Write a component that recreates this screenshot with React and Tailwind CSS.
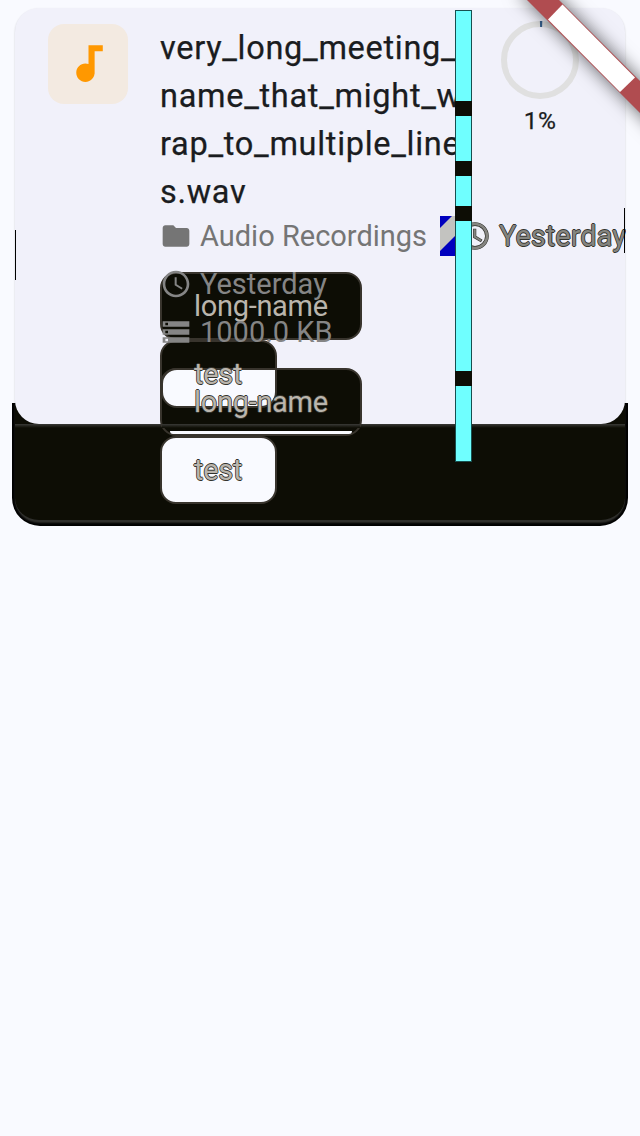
const Clock = ({ outlined }) => (
  <svg viewBox="0 0 24 24" className="size-8 shrink-0" fill="currentColor">
    {outlined && (
      <g fill="none" stroke="#33332d" strokeWidth="0.9">
        <circle cx="12" cy="12" r="9.9" />
        <circle cx="12" cy="12" r="8" />
        <path d="M12.5 7H11v6l5.25 3.15.75-1.23-4.5-2.67z" />
      </g>
    )}
    <path d="M11.99 2C6.47 2 2 6.48 2 12s4.47 10 9.99 10C17.52 22 22 17.52 22 12S17.52 2 11.99 2zM12 20c-4.42 0-8-3.58-8-8s3.58-8 8-8 8 3.58 8 8-3.58 8-8 8zm.5-13H11v6l5.25 3.15.75-1.23-4.5-2.67z" />
  </svg>
);
const Folder = () => (
  <svg viewBox="0 0 24 24" className="size-8 shrink-0" fill="currentColor">
    <path d="M10 4H4c-1.1 0-1.99.9-1.99 2L2 18c0 1.1.9 2 2 2h16c1.1 0 2-.9 2-2V8c0-1.1-.9-2-2-2h-8l-2-2z" />
  </svg>
);
const Storage = () => (
  <svg viewBox="0 0 24 24" className="size-8 shrink-0" fill="currentColor">
    <path d="M2 20h20v-4H2v4zm2-3h2v2H4v-2zM2 4v4h20V4H2zm4 3H4V5h2v2zm-4 7h20v-4H2v4zm2-3h2v2H4v-2z" />
  </svg>
);
const Note = () => (
  <svg viewBox="0 0 24 24" className="-mt-px size-[49px]" fill="#ff9800">
    <path d="M12 3v9.28c-.47-.17-.97-.28-1.5-.28C8.01 12 6 14.01 6 16.5S8.01 21 10.5 21c2.31 0 4.2-1.75 4.45-4H15V6h4V3h-7z" />
  </svg>
);

const outline = "[text-shadow:0.8px_0_#33332d,-0.8px_0_#33332d,0_0.8px_#33332d,0_-0.8px_#33332d]";
const meta = "flex h-10 items-center gap-2 whitespace-nowrap text-[29px] leading-10 tracking-[0px]";

const Chip = ({ wide, light, outlined, children }) => (
  <div
    className={`flex h-[68px] items-center rounded-2xl border-2 border-[#38342d] pl-8 ${wide ? "w-[202px]" : "w-[117px]"} ${light ? "bg-[#f9faff]" : "bg-[#0d0d05]"}`}
  >
    <span
      className={`relative z-10 whitespace-nowrap pb-px text-[29px] leading-10 tracking-[-0.3px] text-[#bab5ad] ${outlined ? outline : ""}`}
    >
      {children}
    </span>
  </div>
);

export default function App() {
  return (
    <div className="relative h-[1136px] w-[640px] overflow-hidden bg-[#f9faff] font-[Roboto,sans-serif]">
      <div className="absolute left-3 top-[403px] flex h-[123px] w-[616px] rounded-b-[28px] bg-black px-[3px] pb-1">
        <div className="grow rounded-b-[24px] border-b-2 border-[#2f2f2c] bg-[#0d0d05] shadow-[0_1px_2px_#2a2a27]" />
      </div>

      <div className="px-[15px] pt-2">
        <div className="relative flex h-[416px] rounded-[24px] bg-[#f1f1fa] pl-[33px] pt-4 shadow-[0_1px_2px_rgba(0,0,0,0.2)]">
          <div className="flex size-20 shrink-0 items-center justify-center rounded-2xl bg-[#f3eae1]">
            <Note />
          </div>
          <div className="ml-8 w-[296px] shrink-0">
            <div className="text-[32.5px] leading-[48px] tracking-[0.7px] text-[#1a1c20] [-webkit-text-stroke:0.25px_#1a1c20]">
              {["very_long_meeting_", "name_that_might_w", "rap_to_multiple_line", "s.wav"].map((t) => (
                <div key={t} className="whitespace-nowrap">{t}</div>
              ))}
            </div>
            <div className={`${meta} text-[#757575]`}>
              <Folder />
              <span>Audio Recordings</span>
              <svg className="ml-[5px] h-10 w-4 shrink-0" viewBox="0 0 16 40">
                <path d="M0 0h16v40H0z" fill="#0000be" />
                <path d="M0 12L12 0h4v19L0 35z" fill="#c3c3c0" />
              </svg>
            </div>
          </div>
          <div className="ml-11 flex w-20 flex-col items-center">
            <svg viewBox="0 0 80 80" className="-mt-1 size-20" fill="none">
              <circle cx="40" cy="40" r="36" stroke="#e0e0e0" strokeWidth="6" />
              <path d="M40 4a36 36 0 0 1 2.2 0" stroke="#36618e" strokeWidth="6" />
            </svg>
            <span className="mt-[5px] text-[24.5px] leading-8 tracking-[0.4px] text-[#1a1c20] [-webkit-text-stroke:0.25px_#1a1c20]">1%</span>
          </div>
          <div className="absolute inset-x-0 top-full h-1 bg-linear-to-b from-[#3a3a37] to-[#0d0d05]" />
        </div>
      </div>

      <div className="absolute left-[160px] top-[272px]">
        <Chip wide>long-name</Chip>
        <Chip outlined>test</Chip>
      </div>
      <div className="absolute left-[160px] top-[368px]">
        <Chip wide outlined>long-name</Chip>
        <Chip light outlined>test</Chip>
        <div className="absolute left-px top-0 h-10 w-[116px] rounded-2xl rounded-tr-none border-2 border-[#38342d] bg-[#f9faff]" />
        <div className="absolute left-0.5 top-14 h-1 w-[198px] bg-linear-to-b from-[#3a3a37] to-[#0d0d05]" />
        <div className="absolute left-2.5 top-[63px] h-[3px] w-[182px] rounded-b bg-[#f9faff]" />
      </div>

      <div className="absolute left-[160px] top-[264px] z-20 flex flex-col gap-2 text-[#858585]">
        <div className={meta}><Clock /><span>Yesterday</span></div>
        <div className={meta}><Storage /><span>1000.0 KB</span></div>
      </div>

      <div className={`absolute left-[459px] top-[216px] w-[167px] overflow-hidden text-[#858580] ${meta} ${outline}`}>
        <Clock outlined />
        <span>Yesterday</span>
      </div>
      <div className="absolute left-[624px] top-[208px] h-[45px] w-px bg-black" />
      <div className="absolute left-[15px] top-[230px] h-[50px] w-px bg-black" />

      <div className="absolute left-[455px] top-[10px] flex h-[452px] w-[17px] flex-col border border-[#185050] bg-[#6fffff]">
        <div className="-mx-px mt-[90px] h-[15px] bg-[#0d0d05]" />
        <div className="-mx-px mt-[45px] h-[15px] bg-[#0d0d05]" />
        <div className="-mx-px mt-[30px] h-[15px] bg-[#0d0d05]" />
        <div className="-mx-px mt-[150px] h-[15px] bg-[#0d0d05]" />
      </div>

      <svg className="absolute right-0 top-0 h-[136px] w-[140px] overflow-visible" viewBox="500 0 140 136">
        <g className="drop-shadow-[0_0_9px_rgba(0,0,0,0.6)]">
          <path d="M517 -10L549 -10L660 101L660 133z" fill="#b04c50" />
        </g>
        <path d="M562.5 4.5L635 77.5L620 92L548 19.5z" fill="#fff" />
      </svg>
    </div>
  );
}
